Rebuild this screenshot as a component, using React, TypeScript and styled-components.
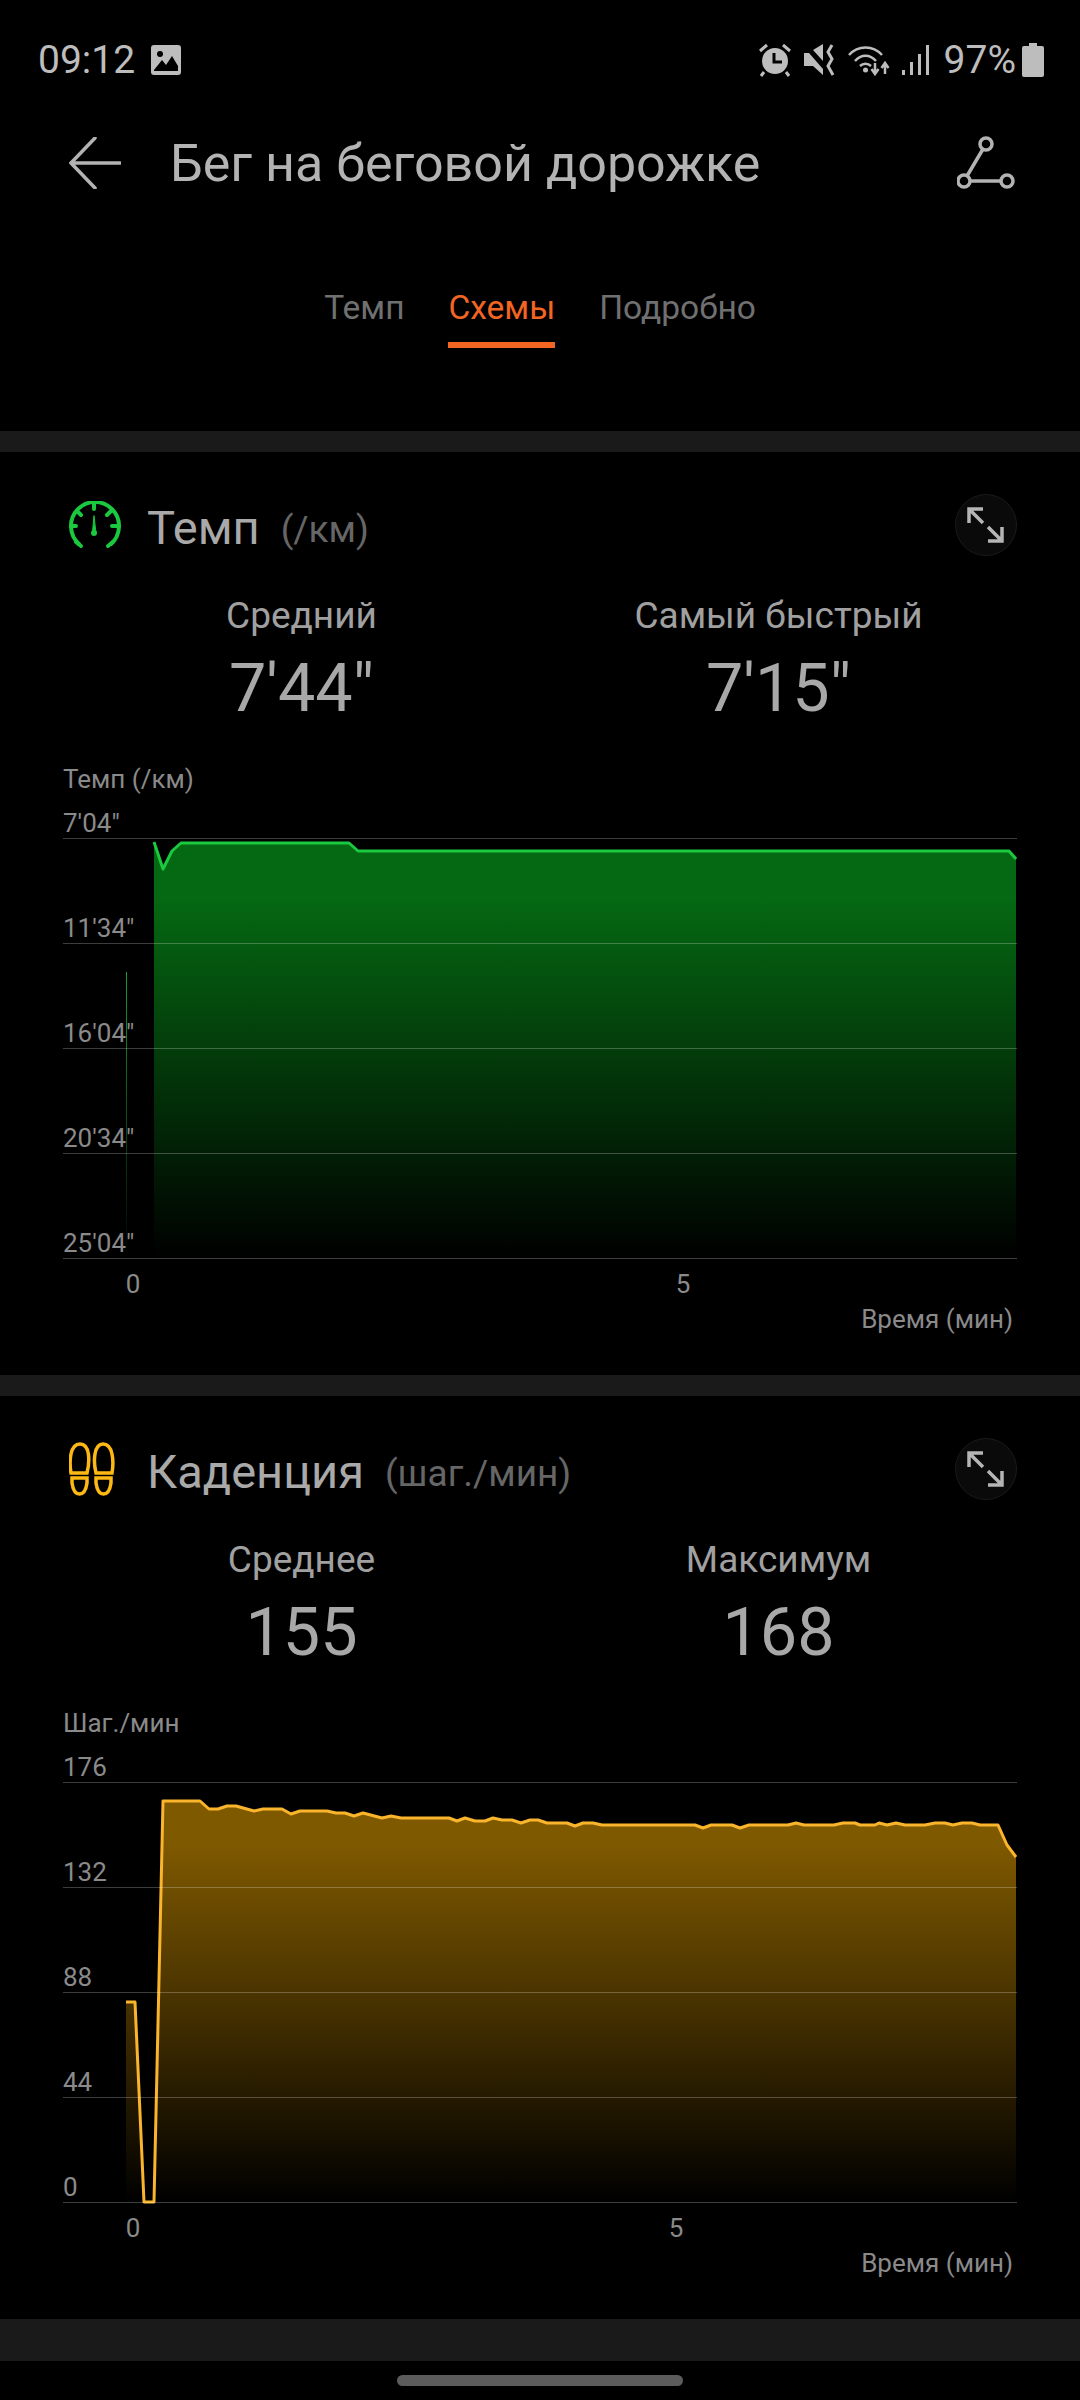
import React from "react";
import styled, { createGlobalStyle } from "styled-components";

const GlobalStyle = createGlobalStyle`
    html, body {
        margin: 0;
        padding: 0;
        background: #000;
    }
    * {
        box-sizing: border-box;
    }
`;

const Page = styled.div`
    width: 1080px;
    height: 2400px;
    overflow: hidden;
    background: #000;
    font-family: Roboto, "Noto Sans", sans-serif;
    color: #b0b0b0;
`;

const StatusBar = styled.div`
    display: flex;
    align-items: center;
    justify-content: space-between;
    height: 40px;
    margin-top: 40px;
    padding: 0 36px 0 38px;
    color: #bdbdbd;
    font-size: 39px;
`;

const StatusGroup = styled.div`
    display: flex;
    align-items: center;
    gap: ${(p: { $gap: number }) => p.$gap}px;
`;

const BatteryPercent = styled.span`
    margin: 0 -6px 0 2px;
`;

const Header = styled.div`
    display: flex;
    align-items: center;
    height: 100px;
    margin-top: 33px;
    padding: 0 65px 0 69px;
`;

const Title = styled.div`
    flex: 1;
    margin-left: 49px;
    font-size: 52px;
    color: #b3b3b3;
`;

const Tabs = styled.div`
    display: flex;
    justify-content: center;
    gap: 44px;
    margin: 55px 0 83px;
`;

const Tab = styled.div<{ $active?: boolean }>`
    height: 80px;
    line-height: 80px;
    font-size: 33.5px;
    color: ${(p) => (p.$active ? "#f26522" : "#707070")};
    border-bottom: 6px solid ${(p) => (p.$active ? "#f26522" : "transparent")};
`;

const Divider = styled.div<{ $height: number }>`
    height: ${(p) => p.$height}px;
    background: #1a1a1a;
`;

const Card = styled.section`
    height: 923px;
    padding: 42px 63px 0;
`;

const CardHeader = styled.div`
    display: flex;
    align-items: center;
    height: 62px;
`;

const CardIcon = styled.div`
    display: flex;
    width: 84px;
    padding-left: 6px;
`;

const CardTitle = styled.div`
    padding-top: 4px;
    font-size: 47px;
    color: #a9a9a9;
`;

const CardUnit = styled.div`
    flex: 1;
    margin-left: 21px;
    padding-top: 9px;
    font-size: 37px;
    color: #666;
`;

const ExpandButton = styled.div`
    display: flex;
    width: 62px;
    height: 62px;
`;

const Stats = styled.div`
    display: grid;
    grid-template-columns: 1fr 1fr;
    margin-top: 38px;
    text-align: center;
`;

const StatLabel = styled.div`
    height: 44px;
    line-height: 44px;
    font-size: 37px;
    color: #a0a0a0;
`;

const StatValue = styled.div`
    height: 72px;
    margin-top: 14px;
    line-height: 72px;
    font-size: 66.5px;
    color: #a8a8a8;
`;

const ChartTitle = styled.div`
    height: 30px;
    margin-top: 40px;
    line-height: 30px;
    font-size: 26px;
    color: #8a8a8a;
`;

const Plot = styled.div`
    position: relative;
`;

const PlotLayer = styled.svg`
    position: absolute;
    top: 0;
    left: 0;
`;

const GridRow = styled.div<{ $first?: boolean }>`
    position: relative;
    display: flex;
    align-items: flex-end;
    height: ${(p) => (p.$first ? 45 : 105)}px;
    border-bottom: 1px solid rgba(255, 255, 255, 0.24);
    font-size: 26px;
    line-height: 30px;
    color: #8a8a8a;
`;

const TimeTicks = styled.div<{ $gap: number }>`
    display: flex;
    gap: ${(p) => p.$gap}px;
    height: 45px;
    padding: 5px 0 0 50px;
`;

const TimeTick = styled.div`
    width: 40px;
    line-height: 40px;
    text-align: center;
    font-size: 26px;
    color: #8a8a8a;
`;

const TimeLabel = styled.div`
    height: 30px;
    line-height: 30px;
    padding-right: 4px;
    text-align: right;
    font-size: 26px;
    color: #8a8a8a;
`;

const HomeBar = styled.div`
    width: 286px;
    height: 11px;
    margin: 14px auto 0;
    border-radius: 6px;
    background: #5c5c5c;
`;

const ImageIcon = () => (
    <svg width="32" height="32" viewBox="0 0 32 32">
        <rect x="1" y="1" width="30" height="30" rx="3" fill="#bdbdbd" />
        <circle cx="10" cy="10" r="3" fill="#000" />
        <path d="M4 26 L12 16 L16 21 L22 12 L28 22 L28 27 L4 27 Z" fill="#000" />
    </svg>
);

const AlarmIcon = () => (
    <svg width="34" height="34" viewBox="0 0 34 34">
        <circle cx="17" cy="18" r="13" fill="#bdbdbd" />
        <path d="M16 10 V19 H24" fill="none" stroke="#000" strokeWidth="3" />
        <path d="M2 8 L9 2 M25 2 L32 8 M6 29 L3 33 M28 29 L31 33" stroke="#bdbdbd" strokeWidth="3" fill="none" />
    </svg>
);

const MuteIcon = () => (
    <svg width="32" height="32" viewBox="0 0 32 32">
        <path d="M0 9 H5 L19 25 V31 L9 22 H0 Z" fill="#bdbdbd" />
        <path d="M9 6 L19 0 V17 Z" fill="#bdbdbd" />
        <path d="M28 1 L24 8 L28 15 L24 22 L29 31" fill="none" stroke="#bdbdbd" strokeWidth="3" />
    </svg>
);

const WifiIcon = () => (
    <svg width="42" height="32" viewBox="0 0 42 32">
        <g fill="none" stroke="#bdbdbd" strokeWidth="2.5">
            <path d="M1 11 C10 1 25 1 34 11" />
            <path d="M7 17 C13 10 22 10 28 17" />
            <path d="M12 22 C15 19 20 19 23 22" />
        </g>
        <circle cx="17.5" cy="26" r="2.5" fill="#bdbdbd" />
        <path d="M27 19 V29 M23.5 25 L27 30 L30.5 25" fill="none" stroke="#bdbdbd" strokeWidth="2.5" />
        <path d="M37 30 V20 M33.5 24 L37 19 L40.5 24" fill="none" stroke="#bdbdbd" strokeWidth="2.5" />
    </svg>
);

const SignalIcon = () => (
    <svg width="28" height="32" viewBox="0 0 28 32">
        <g fill="#bdbdbd">
            <rect x="0" y="26" width="3" height="5" />
            <rect x="8" y="18" width="3" height="13" />
            <rect x="16" y="10" width="3" height="21" />
            <rect x="24" y="1" width="3" height="30" />
        </g>
    </svg>
);

const BatteryIcon = () => (
    <svg width="22" height="34" viewBox="0 0 22 34">
        <path d="M7 0 H15 V3 H20 Q22 3 22 5 V32 Q22 34 20 34 H2 Q0 34 0 32 V5 Q0 3 2 3 H7 Z" fill="#bdbdbd" />
    </svg>
);

const BackIcon = () => (
    <svg width="52" height="52" viewBox="0 0 52 52" fill="none" stroke="#b3b3b3" strokeWidth="3.5" strokeLinecap="round">
        <path d="M26 1 L2 26 L26 51 M2 26 H51" />
    </svg>
);

const RouteIcon = () => (
    <svg width="58" height="54" viewBox="0 0 58 54" fill="none" stroke="#b3b3b3" strokeWidth="3.5">
        <circle cx="29" cy="8" r="6" />
        <circle cx="7" cy="45" r="6" />
        <circle cx="50" cy="45" r="6" />
        <path d="M26 13 L10 40 M13 45 H44" />
    </svg>
);

const GaugeIcon = () => (
    <svg width="52" height="48" viewBox="69 503 52 48" fill="none" stroke="#1ac93f" strokeWidth="4" strokeLinecap="round">
        <path d="M79 546 A24 24 0 1 1 111 546" />
        <path d="M76 544 L81 548 M108 548 L113 544" />
        <path d="M94 505 V511 M77 513 L81 517 M111 513 L107 517 M71 528 H76 M117 528 H112" />
        <path d="M94 518 L92.5 534 H95.5 Z" fill="#1ac93f" strokeWidth="1" strokeLinejoin="round" />
        <circle cx="94" cy="535" r="3" fill="#1ac93f" stroke="none" />
    </svg>
);

const StepsIcon = () => (
    <svg width="46" height="54" viewBox="72 1443 46 54" fill="none" stroke="#fdb913" strokeWidth="3.5">
        <path d="M74 1474 C72 1462 73 1445 83 1445 C93 1445 93 1462 90 1474 Z" />
        <path d="M75 1479 H90 V1484 C89 1491 86 1495 82.5 1495 C79 1495 76 1491 75 1484 Z" />
        <path d="M115 1474 C117 1462 116 1445 106 1445 C97 1445 96 1462 99 1474 Z" />
        <path d="M114 1479 H99 V1484 C100 1491 103 1495 106.5 1495 C110 1495 113 1491 114 1484 Z" />
    </svg>
);

const ExpandIcon = () => (
    <svg width="62" height="62" viewBox="955 494 62 62" fill="none">
        <circle cx="986" cy="525" r="30.5" fill="#0a0a0a" stroke="#1a1a1a" strokeWidth="1" />
        <g stroke="#b5b5b5" strokeWidth="3.5">
            <path d="M983 509 H969 V523 M969 509 L983 523" />
            <path d="M988 541 H1002 V527 M1002 541 L988 527" />
        </g>
    </svg>
);

type Chart = {
    id: string;
    top: number;
    line: string;
    fill: string;
    points: number[][];
    baseline: number;
    extra?: React.ReactNode;
};

const toPoints = (points: number[][]) => points.map((p) => p.join(",")).join(" ");

const ChartLayer: React.FC<{ chart: Chart }> = ({ chart }) => {
    const { id, top, line, fill, points, baseline, extra } = chart;
    const first = points[0];
    const last = points[points.length - 1];
    return (
        <PlotLayer width="954" height="466" viewBox={`63 ${top} 954 466`}>
            <defs>
                <linearGradient id={id} gradientUnits="userSpaceOnUse" x1="0" y1={top + 5} x2="0" y2={baseline}>
                    <stop offset="0" stopColor={fill} />
                    <stop offset="0.22" stopColor={fill} />
                    <stop offset="1" stopColor="#000" />
                </linearGradient>
            </defs>
            {extra}
            <polygon
                points={`${first[0]},${baseline} ${toPoints(points)} ${last[0]},${baseline}`}
                fill={`url(#${id})`}
            />
            <polyline points={toPoints(points)} fill="none" stroke={line} strokeWidth="3" strokeLinejoin="round" />
        </PlotLayer>
    );
};

const paceChart: Chart = {
    id: "paceFill",
    top: 794,
    line: "#1ac93f",
    fill: "#056812",
    baseline: 1258,
    points: [
        [154, 842], [163, 869], [172, 851], [181, 843], [349, 843], [358, 851], [1009, 851], [1016, 859],
    ],
    extra: (
        <>
            <defs>
                <linearGradient id="paceThin" gradientUnits="userSpaceOnUse" x1="0" y1="972" x2="0" y2="1258">
                    <stop offset="0" stopColor="#14a032" />
                    <stop offset="1" stopColor="#000" />
                </linearGradient>
            </defs>
            <rect x="126" y="972" width="1" height="286" fill="url(#paceThin)" />
        </>
    ),
};

const cadenceChart: Chart = {
    id: "cadenceFill",
    top: 1738,
    line: "#fbb52c",
    fill: "#7f5900",
    baseline: 2202,
    points: [
        [126, 2002], [135, 2002], [144, 2202], [154, 2202], [163, 1801], [200, 1801], [209, 1809], [218, 1809],
        [227, 1806], [236, 1806], [254, 1811], [263, 1809], [282, 1809], [291, 1814], [300, 1811], [327, 1811],
        [336, 1813], [345, 1813], [354, 1816], [363, 1813], [382, 1818], [391, 1816], [401, 1818], [449, 1818],
        [457, 1821], [465, 1818], [475, 1821], [485, 1821], [493, 1818], [502, 1820], [512, 1820], [521, 1823],
        [530, 1820], [538, 1820], [547, 1823], [567, 1823], [575, 1826], [583, 1823], [593, 1823], [602, 1825],
        [695, 1825], [703, 1828], [711, 1825], [732, 1825], [740, 1828], [749, 1825], [788, 1825],
        [796, 1823], [804, 1825], [834, 1825], [843, 1823], [855, 1823], [860, 1825], [875, 1825], [879, 1823],
        [887, 1825], [896, 1823], [905, 1825], [925, 1825], [935, 1823], [945, 1823], [953, 1825], [962, 1823],
        [972, 1823], [980, 1825], [998, 1825], [1007, 1845], [1016, 1857],
    ],
};

type Metric = {
    icon: React.ReactNode;
    title: string;
    unit: string;
    stats: string[][];
    axisTitle: string;
    ticks: string[];
    tickGap: number;
    chart: Chart;
};

const metrics: Metric[] = [
    {
        icon: <GaugeIcon />,
        title: "Темп",
        unit: "(/км)",
        stats: [["Средний", "7'44\""], ["Самый быстрый", "7'15\""]],
        axisTitle: "Темп (/км)",
        ticks: ["7'04\"", "11'34\"", "16'04\"", "20'34\"", "25'04\""],
        tickGap: 510,
        chart: paceChart,
    },
    {
        icon: <StepsIcon />,
        title: "Каденция",
        unit: "(шаг./мин)",
        stats: [["Среднее", "155"], ["Максимум", "168"]],
        axisTitle: "Шаг./мин",
        ticks: ["176", "132", "88", "44", "0"],
        tickGap: 503,
        chart: cadenceChart,
    },
];

const MetricCard: React.FC<{ metric: Metric }> = ({ metric }) => (
    <Card>
        <CardHeader>
            <CardIcon>{metric.icon}</CardIcon>
            <CardTitle>{metric.title}</CardTitle>
            <CardUnit>{metric.unit}</CardUnit>
            <ExpandButton><ExpandIcon /></ExpandButton>
        </CardHeader>
        <Stats>
            {metric.stats.map(([label, value]) => (
                <div key={label}>
                    <StatLabel>{label}</StatLabel>
                    <StatValue>{value}</StatValue>
                </div>
            ))}
        </Stats>
        <ChartTitle>{metric.axisTitle}</ChartTitle>
        <Plot>
            <ChartLayer chart={metric.chart} />
            {metric.ticks.map((tick, i) => (
                <GridRow key={tick} $first={i === 0}>{tick}</GridRow>
            ))}
        </Plot>
        <TimeTicks $gap={metric.tickGap}>
            <TimeTick>0</TimeTick>
            <TimeTick>5</TimeTick>
        </TimeTicks>
        <TimeLabel>Время (мин)</TimeLabel>
    </Card>
);

const App: React.FC = () => (
    <Page>
        <GlobalStyle />
        <StatusBar>
            <StatusGroup $gap={15}>
                <span>09:12</span>
                <ImageIcon />
            </StatusGroup>
            <StatusGroup $gap={12}>
                <AlarmIcon />
                <MuteIcon />
                <WifiIcon />
                <SignalIcon />
                <BatteryPercent>97%</BatteryPercent>
                <BatteryIcon />
            </StatusGroup>
        </StatusBar>
        <Header>
            <BackIcon />
            <Title>Бег на беговой дорожке</Title>
            <RouteIcon />
        </Header>
        <Tabs>
            <Tab>Темп</Tab>
            <Tab $active>Схемы</Tab>
            <Tab>Подробно</Tab>
        </Tabs>
        <Divider $height={21} />
        <MetricCard metric={metrics[0]} />
        <Divider $height={21} />
        <MetricCard metric={metrics[1]} />
        <Divider $height={42} />
        <HomeBar />
    </Page>
);

export default App;
